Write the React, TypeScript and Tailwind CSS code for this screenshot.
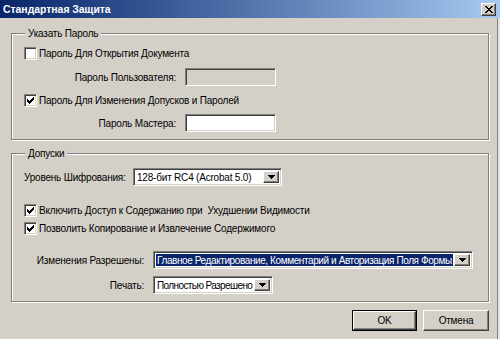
import React from 'react';

const sunken =
  'border border-t-[#808080] border-l-[#808080] border-b-white border-r-white shadow-[inset_1px_1px_0_#404040,inset_-1px_-1px_0_#d4d0c8]';
const raised =
  'border border-t-white border-l-white border-r-[#404040] border-b-[#404040] shadow-[inset_-1px_-1px_0_#808080,inset_1px_1px_0_#d4d0c8]';

function Check({ checked }: { checked?: boolean }) {
  return (
    <span className={`w-[13px] h-[13px] bg-white shrink-0 flex items-center justify-center ${sunken}`}>
      {checked && (
        <svg width="7" height="7" viewBox="0 0 7 7" shapeRendering="crispEdges">
          <path
            d="M0 2h1v3H0z M1 3h1v3H1z M2 4h1v3H2z M3 3h1v3H3z M4 2h1v3H4z M5 1h1v3H5z M6 0h1v3H6z"
            fill="#000"
          />
        </svg>
      )}
    </span>
  );
}

function Arrow() {
  return (
    <span className={`w-[16px] h-full shrink-0 bg-[#d4d0c8] flex items-center justify-center ${raised}`}>
      <svg width="7" height="4" viewBox="0 0 7 4" shapeRendering="crispEdges">
        <path d="M0 0h7v1H0z M1 1h5v1H1z M2 2h3v1H2z M3 3h1v1H3z" fill="#000" />
      </svg>
    </span>
  );
}

function CheckRow({ label, checked, className }: { label: string; checked?: boolean; className: string }) {
  return (
    <div className={`h-[14px] flex items-center gap-[2px] ${className}`}>
      <Check checked={checked} />
      <span className="whitespace-pre">{label}</span>
    </div>
  );
}

const Dialog: React.FC = () => {
  return (
    <div className="w-[500px] h-[339px] overflow-hidden bg-[#d4d0c8] text-black text-[10px] tracking-[-0.2px] leading-[13px] font-['Liberation_Sans',Arial,sans-serif] flex flex-col shadow-[inset_-2px_0_0_#e4e2dc,inset_-3px_0_0_#808080]">
      {/* title bar */}
      <div className="h-[18px] shrink-0 flex items-center justify-between pl-[3px] pr-[4px] bg-linear-to-r from-[#0a246a] to-[#a6caf0]">
        <span className="text-white font-bold text-[10.4px] tracking-normal">Стандартная Защита</span>
        <span className={`w-[15px] h-[13px] bg-[#d4d0c8] flex items-center justify-center ${raised}`}>
          <svg width="8" height="7" viewBox="0 0 8 7" shapeRendering="crispEdges">
            <path
              d="M0 0h2v1H0z M6 0h2v1H6z M1 1h2v1H1z M5 1h2v1H5z M2 2h4v1H2z M3 3h2v1H3z M2 4h4v1H2z M1 5h2v1H1z M5 5h2v1H5z M0 6h2v1H0z M6 6h2v1H6z"
              fill="#000"
            />
          </svg>
        </span>
      </div>

      <div className="flex flex-col pl-[11px] pr-[11px] pt-[9px]">
        {/* password group */}
        <fieldset className="border border-[#808080] shadow-[inset_1px_1px_0_#fff,1px_1px_0_#fff]">
          <legend className="ml-[13px] px-[3px] leading-[13px] bg-[#d4d0c8]">Указать Пароль</legend>
          <div className="flex flex-col pl-[12px] pb-[7px]">
            <CheckRow className="mt-[6px]" label="Пароль Для Открытия Документа" />
            <div className="mt-[8px] h-[18px] flex items-center">
              <span className="w-[152px] text-right whitespace-nowrap">Пароль Пользователя:</span>
              <span className={`ml-[9px] w-[91px] h-[18px] bg-[#d4d0c8] ${sunken}`} />
            </div>
            <CheckRow className="mt-[7px]" checked label="Пароль Для Изменения Допусков и Паролей" />
            <div className="mt-[7px] h-[18px] flex items-center">
              <span className="w-[152px] text-right whitespace-nowrap">Пароль Мастера:</span>
              <span className={`ml-[9px] w-[91px] h-[18px] bg-white ${sunken}`} />
            </div>
          </div>
        </fieldset>

        {/* permissions group */}
        <fieldset className="mt-[7px] border border-[#808080] shadow-[inset_1px_1px_0_#fff,1px_1px_0_#fff]">
          <legend className="ml-[13px] px-[3px] leading-[13px] bg-[#d4d0c8]">Допуски</legend>
          <div className="flex flex-col pl-[12px] pb-[7px]">
            <div className="mt-[8px] h-[18px] flex items-center">
              <span className="w-[109px] whitespace-nowrap">Уровень Шифрования:</span>
              <div className={`w-[149px] h-[18px] bg-white flex items-stretch p-[2px] ${sunken}`}>
                <span className="flex-1 pl-[1px] flex items-center whitespace-nowrap">128-бит RC4 (Acrobat 5.0)</span>
                <Arrow />
              </div>
            </div>
            <CheckRow className="mt-[17px]" checked label="Включить Доступ к Содержанию при  Ухудшении Видимости" />
            <CheckRow className="mt-[4px]" checked label="Позволить Копирование и Извлечение Содержимого" />
            <div className="mt-[16px] h-[18px] flex items-center">
              <span className="w-[120px] text-right whitespace-nowrap">Изменения Разрешены:</span>
              <div className={`ml-[9px] w-[320px] h-[18px] bg-white flex items-stretch p-[2px] ${sunken}`}>
                <span className="flex-1 mr-[1px] pl-[1px] bg-[#0a246a] text-white tracking-[-0.4px] flex items-center whitespace-nowrap overflow-hidden">
                  Главное Редактирование, Комментарий и Авторизация Поля Формы
                </span>
                <Arrow />
              </div>
            </div>
            <div className="mt-[7px] h-[18px] flex items-center">
              <span className="w-[120px] text-right whitespace-nowrap">Печать:</span>
              <div className={`ml-[9px] w-[120px] h-[18px] bg-white flex items-stretch p-[2px] ${sunken}`}>
                <span className="flex-1 pl-[1px] tracking-[-0.6px] flex items-center whitespace-nowrap overflow-hidden">Полностью Разрешено</span>
                <Arrow />
              </div>
            </div>
          </div>
        </fieldset>

        {/* buttons */}
        <div className="mt-[8px] flex justify-end gap-[6px]">
          <div className="w-[65px] h-[21px] border border-black flex">
            <span className={`flex-1 bg-[#d4d0c8] flex items-center justify-center ${raised}`}>OK</span>
          </div>
          <span className={`w-[66px] h-[21px] bg-[#d4d0c8] flex items-center justify-center ${raised}`}>Отмена</span>
        </div>
      </div>
    </div>
  );
};

export default function App() {
  return <Dialog />;
}
